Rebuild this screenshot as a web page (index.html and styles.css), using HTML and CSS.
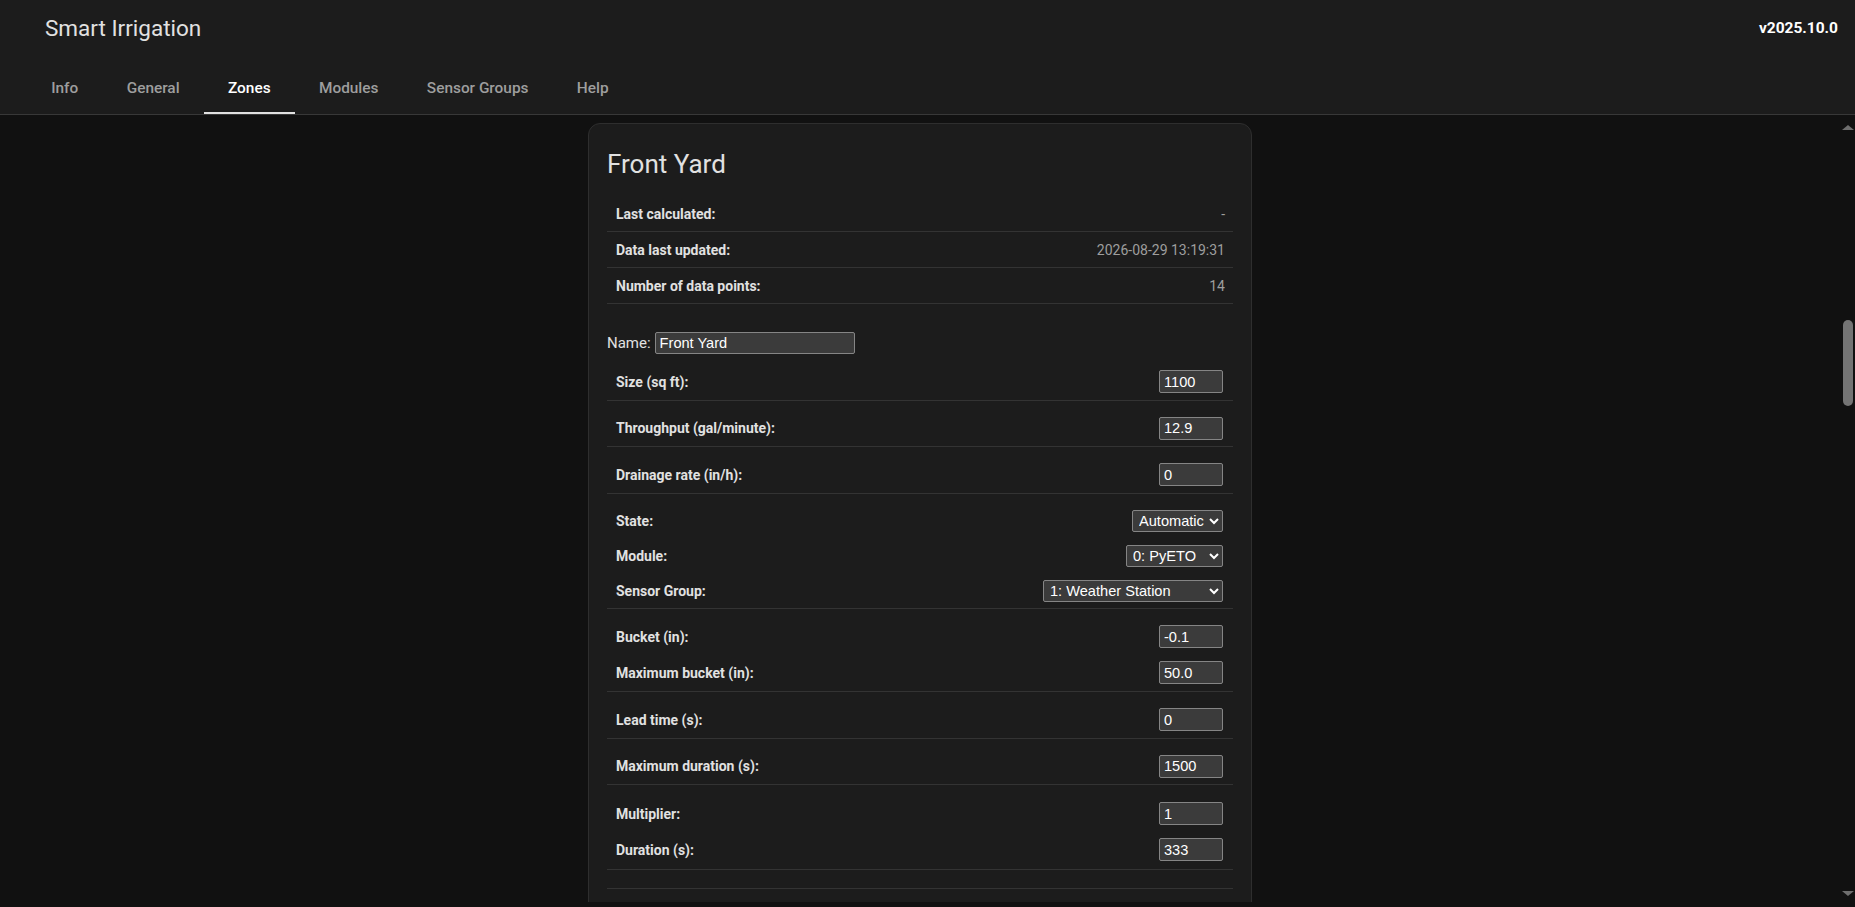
FILE: index.html
```html
<!DOCTYPE html>
<html lang="en">
<head>
<meta charset="utf-8">
<title>Smart Irrigation</title>
<link rel="stylesheet" href="styles.css">
</head>
<body>
<div class="app">
  <header class="topbar">
    <div class="toolbar">
      <div class="app-title">Smart Irrigation</div>
      <div class="version">v2025.10.0</div>
    </div>
    <nav class="tabs">
      <a class="tab" href="#info">Info</a>
      <a class="tab" href="#general">General</a>
      <a class="tab active" href="#zones">Zones</a>
      <a class="tab" href="#modules">Modules</a>
      <a class="tab" href="#sensor-groups">Sensor Groups</a>
      <a class="tab" href="#help">Help</a>
    </nav>
  </header>
  <div class="view">
    <main class="content">
      <section class="card zone-card">
        <h1 class="card-header">Front Yard</h1>
        <div class="card-content">
          <div class="info-row"><span class="info-label">Last calculated:</span><span class="info-value">-</span></div>
          <div class="info-row"><span class="info-label">Data last updated:</span><span class="info-value">2026-08-29 13:19:31</span></div>
          <div class="info-row"><span class="info-label">Number of data points:</span><span class="info-value">14</span></div>

          <div class="name-line">
            <label class="name-label" for="name-front">Name:</label>
            <input class="field name-input" id="name-front" type="text" value="Front Yard">
          </div>

          <div class="section">
            <div class="row"><label class="row-label">Size (sq ft):</label><input class="field num" type="text" value="1100"></div>
          </div>
          <div class="section">
            <div class="row"><label class="row-label">Throughput (gal/minute):</label><input class="field num" type="text" value="12.9"></div>
          </div>
          <div class="section">
            <div class="row"><label class="row-label">Drainage rate (in/h):</label><input class="field num" type="text" value="0"></div>
          </div>
          <div class="section">
            <div class="row row-select"><label class="row-label">State:</label>
              <select class="picker picker-state"><option selected>Automatic</option><option>Disabled</option><option>Manual</option></select>
            </div>
            <div class="row row-select"><label class="row-label">Module:</label>
              <select class="picker picker-module"><option selected>0: PyETO</option><option>1: Static</option><option>2: Passthrough</option></select>
            </div>
            <div class="row row-select"><label class="row-label">Sensor Group:</label>
              <select class="picker picker-group"><option selected>1: Weather Station</option><option>0: Default</option></select>
            </div>
          </div>
          <div class="section">
            <div class="row"><label class="row-label">Bucket (in):</label><input class="field num" type="text" value="-0.1"></div>
            <div class="row"><label class="row-label">Maximum bucket (in):</label><input class="field num" type="text" value="50.0"></div>
          </div>
          <div class="section">
            <div class="row"><label class="row-label">Lead time (s):</label><input class="field num" type="text" value="0"></div>
          </div>
          <div class="section">
            <div class="row"><label class="row-label">Maximum duration (s):</label><input class="field num" type="text" value="1500"></div>
          </div>
          <div class="section section-tall">
            <div class="row"><label class="row-label">Multiplier:</label><input class="field num" type="text" value="1"></div>
            <div class="row"><label class="row-label">Duration (s):</label><input class="field num" type="text" value="333"></div>
          </div>
          <div class="section section-empty"></div>
        </div>
      </section>
    </main>
    <div class="scrollbar" aria-hidden="true">
      <span class="sb-arrow sb-up"></span>
      <span class="sb-thumb"></span>
      <span class="sb-track-rest"></span>
      <span class="sb-arrow sb-down"></span>
    </div>
  </div>
</div>
</body>
</html>
```

FILE: styles.css
```css
:root {
  color-scheme: dark;
}

html,
body {
  margin: 0;
  height: 100%;
}

body {
  background: #111111;
  color: #e1e1e1;
  font-family: Roboto, "Noto Sans", "Liberation Sans", sans-serif;
  overflow: hidden;
}

.app {
  display: flex;
  flex-direction: column;
  height: 100vh;
}

/* ---------- top bar ---------- */
.topbar {
  flex: none;
  background: #1c1c1c;
  border-bottom: 1px solid #383838;
}

.toolbar {
  height: 56px;
  display: flex;
  align-items: center;
  justify-content: space-between;
  padding: 0 17px 0 45px;
}

.app-title {
  font-size: 22.5px;
  color: #e1e1e1;
}

.version {
  font-size: 15.5px;
  font-weight: 700;
  color: #ffffff;
}

.tabs {
  height: 58px;
  display: flex;
  align-items: flex-end;
  padding-left: 27px;
}

.tab {
  position: relative;
  height: 53px;
  display: flex;
  align-items: center;
  padding: 0 24.2px;
  font-size: 15.4px;
  font-weight: 500;
  color: #9e9e9e;
  text-decoration: none;
}

.tab.active {
  color: #ffffff;
}

.tab.active::after {
  content: "";
  position: absolute;
  left: 0;
  right: 0;
  bottom: 0;
  height: 2px;
  background: #e1e1e1;
}

/* ---------- view with content + scrollbar ---------- */
.view {
  flex: 1;
  min-height: 0;
  display: flex;
}

.content {
  flex: 1;
  min-width: 0;
  margin-bottom: 5px;
  overflow: hidden;
  display: flex;
  flex-direction: column;
  align-items: center;
  padding-top: 8px;
}

.scrollbar {
  flex: none;
  width: 15px;
  display: flex;
  flex-direction: column;
  align-items: center;
  padding: 9.5px 0 11.5px;
  box-sizing: border-box;
}

.sb-arrow {
  width: 0;
  height: 0;
  border-left: 6px solid transparent;
  border-right: 6px solid transparent;
}

.sb-up {
  border-bottom: 5px solid #6e6e6e;
}

.sb-down {
  border-top: 5px solid #6e6e6e;
}

.sb-thumb {
  width: 10px;
  height: 86px;
  margin-top: 190.5px;
  border-radius: 5px;
  background: #747474;
}

.sb-track-rest {
  flex: 1;
}

/* ---------- cards ---------- */
.card {
  flex: none;
  width: 664px;
  box-sizing: border-box;
  background: #1c1c1c;
  border: 1px solid #2e2e2e;
  border-radius: 12px;
}

.card-header {
  margin: 0;
  padding: 24px 18px 16px;
  font-size: 26px;
  font-weight: 400;
  line-height: 32px;
  color: #e1e1e1;
}

.card-content {
  padding: 0 18px 48px;
}

.info-row {
  height: 35px;
  display: flex;
  align-items: center;
  justify-content: space-between;
  padding: 0 8px 0 9px;
  border-bottom: 1px solid #333333;
}

.info-label,
.row-label {
  font-size: 14px;
  font-weight: 700;
  color: #e1e1e1;
}

.info-value {
  font-size: 14px;
  color: #9e9e9e;
}

.name-line {
  display: flex;
  align-items: center;
  gap: 4px;
  height: 23px;
  margin-top: 27px;
}

.name-label {
  font-size: 15px;
  color: #e1e1e1;
}

.section {
  padding-top: 9.6px;
  border-bottom: 1px solid #333333;
}

.section-tall {
  padding-top: 10.6px;
  padding-bottom: 1px;
}

.section-empty {
  height: 8.5px;
}

.row {
  height: 36px;
  display: flex;
  align-items: center;
  justify-content: space-between;
  padding: 0 10px 0 9px;
}

.row-select {
  height: 35px;
}

/* ---------- form controls ---------- */
.field {
  box-sizing: border-box;
  height: 23px;
  margin: 0;
  padding: 1px 4px;
  background: #3b3b3b;
  border: 1px solid #858585;
  border-radius: 2px;
  color: #ffffff;
  font-family: "Liberation Sans", Arial, sans-serif;
  font-size: 14.6px;
}

.name-input {
  width: 200px;
  height: 22px;
}

.num {
  width: 64px;
}

.picker {
  box-sizing: border-box;
  height: 22px;
  margin: 0;
  padding: 0 2px;
  background-color: #3b3b3b;
  border: 1px solid #858585;
  border-radius: 2px;
  color: #ffffff;
  font-family: "Liberation Sans", Arial, sans-serif;
  font-size: 14.6px;
}

.picker-state {
  width: 91px;
}

.picker-module {
  width: 97px;
}

.picker-group {
  width: 180px;
}
```
